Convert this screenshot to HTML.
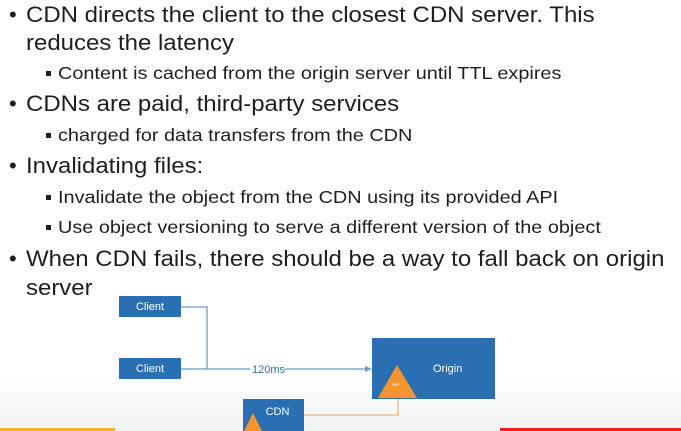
<!DOCTYPE html>
<html><head><meta charset="utf-8"><style>
body{margin:0;width:681px;height:431px;overflow:hidden;background:linear-gradient(#fff 0,#fff 380px,#f1f2f2 431px);font-family:"Liberation Sans",sans-serif;color:#1e1e1e;position:relative}
.l1,.l2{position:absolute;white-space:nowrap;transform-origin:0 50%}
.l1{font-size:22px;left:26px;transform:scaleX(1.09)}
.b{position:absolute;left:-26px;top:0;font-size:22px;color:#1e1e1e}
.l2{font-size:17.5px;left:58px;transform:scaleX(1.135)}
.s{position:absolute;left:46px;width:5px;height:5px;background:#1e1e1e}
.box{position:absolute;background:#2a6fb2;color:#fff;font-size:11px;display:flex;align-items:center;justify-content:center}
</style></head><body>
<div class="b" style="left:9px;top:2px">•</div>
<div class="l1" style="top:2px">CDN directs the client to the closest CDN server. This</div>
<div class="l1" style="top:30px">reduces the latency</div>
<div class="s" style="top:71px"></div>
<div class="l2" style="top:63px">Content is cached from the origin server until TTL expires</div>
<div class="b" style="left:9px;top:91px">•</div>
<div class="l1" style="top:91px">CDNs are paid, third-party services</div>
<div class="s" style="top:133px"></div>
<div class="l2" style="top:125px">charged for data transfers from the CDN</div>
<div class="b" style="left:9px;top:153px">•</div>
<div class="l1" style="top:153px">Invalidating files:</div>
<div class="s" style="top:195px"></div>
<div class="l2" style="top:187px">Invalidate the object from the CDN using its provided API</div>
<div class="s" style="top:225px"></div>
<div class="l2" style="top:217px">Use object versioning to serve a different version of the object</div>
<div class="b" style="left:9px;top:246px">•</div>
<div class="l1" style="top:246px">When CDN fails, there should be a way to fall back on origin</div>
<div class="l1" style="top:275px">server</div>

<svg style="position:absolute;left:0;top:0" width="681" height="431">
<polyline points="181,307 207,307 207,369" fill="none" stroke="#6a9cc8" stroke-width="1.3"/>
<line x1="181" y1="369" x2="250" y2="369" stroke="#6a9cc8" stroke-width="1.3"/>
<line x1="285" y1="369" x2="366" y2="369" stroke="#6a9cc8" stroke-width="1.3"/>
<polygon points="372,369 365,366 365,372" fill="#6a9cc8"/>
<text x="252" y="373" font-size="11" fill="#2a6fb2" font-family="Liberation Sans">120ms</text>
<polyline points="304,415 398,415 398,395" fill="none" stroke="#f3b770" stroke-width="1.3"/>
</svg>
<div class="box" style="left:119px;top:296px;width:62px;height:21px">Client</div>
<div class="box" style="left:119px;top:358px;width:62px;height:21px">Client</div>
<div class="box" style="left:372px;top:338px;width:123px;height:61px;justify-content:flex-start;padding-left:61px;box-sizing:border-box">Origin</div>
<div class="box" style="left:243px;top:399px;width:61px;height:32px;padding:0 0 6px 8px;box-sizing:border-box">CDN</div>
<svg style="position:absolute;left:0;top:0" width="681" height="431">
<polygon points="397,365 378,398 417,398" fill="#f5952d"/>
<text x="392" y="386" font-size="4" fill="#fff" font-family="Liberation Sans">IMG</text>
<polygon points="253,413 244,431 262,431" fill="#f5952d"/>
</svg>
<div style="position:absolute;left:0;top:428px;width:115px;height:3px;background:#f3b229"></div>
<div style="position:absolute;left:500px;top:428px;width:181px;height:3px;background:#e52521"></div>
</body></html>
